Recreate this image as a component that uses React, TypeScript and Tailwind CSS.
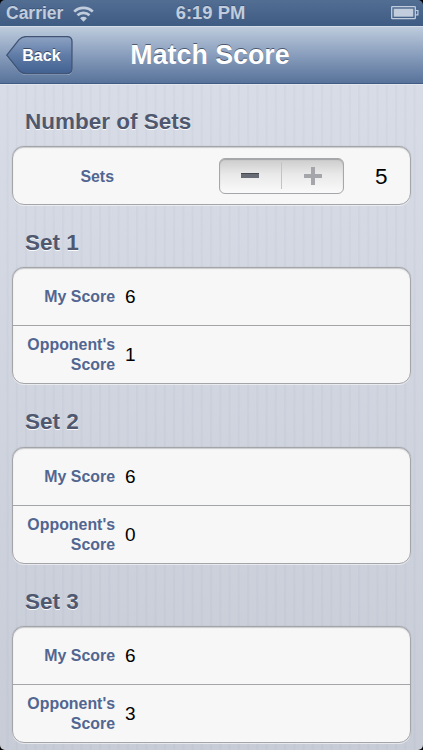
interface MatchSet {
  name: string;
  mine: number;
  opponent: number;
}

const sets: MatchSet[] = [
  { name: "Set 1", mine: 6, opponent: 1 },
  { name: "Set 2", mine: 6, opponent: 0 },
  { name: "Set 3", mine: 6, opponent: 3 },
];

const card =
  "rounded-[12px] border border-[#a4a5a9] bg-[#f7f7f7] shadow-[0_1px_0_rgba(255,255,255,0.6),0_0_1px_rgba(120,122,130,0.5),inset_0_1px_1px_rgba(120,122,130,0.35)]";

function StatusBar() {
  return (
    <header className="grid h-[26px] shrink-0 grid-cols-3 items-center bg-linear-to-b from-[#536e93] to-[#3e5b83] pr-1 pl-[5px] text-[#c1cddd] [text-shadow:0_-1px_0_rgba(30,50,80,0.35)]">
      <div className="flex items-center gap-[10px] pt-px pl-px">
        <span className="text-[17.5px] leading-none font-bold">Carrier</span>
        <svg width="21" height="16" viewBox="0 0 21 16" fill="none" stroke="currentColor" strokeWidth="2.7">
          <path d="M1.2 5.6a13.3 13.3 0 0 1 18.6 0" />
          <path d="M4.5 9.3a8.6 8.6 0 0 1 12 0" />
          <path d="M7.1 12.2a4.7 4.7 0 0 1 6.8 0L10.5 15.8z" fill="currentColor" stroke="none" />
        </svg>
      </div>
      <span className="-ml-[3px] pt-px text-center text-[18.4px] leading-none font-bold whitespace-nowrap">6:19 PM</span>
      <svg className="justify-self-end" width="28" height="14" viewBox="0 0 28 14" fill="none" stroke="currentColor">
        <rect x="0.7" y="0.7" width="23.6" height="12" rx="0.6" strokeWidth="1.3" />
        <rect x="2.7" y="2.7" width="19.6" height="8" fill="currentColor" stroke="none" />
        <path d="M24.7 4.5h2.2v4.4h-2.2" strokeWidth="1.2" />
      </svg>
    </header>
  );
}

function BackButton() {
  return (
    <button className="relative h-[39px] w-[67px] text-white">
      <svg className="absolute inset-0" width="67" height="39" viewBox="0 0 67 39">
        <defs>
          <linearGradient id="back-fill" x1="0" y1="0" x2="0" y2="1">
            <stop offset="0" stopColor="#8ea3c3" />
            <stop offset="0.5" stopColor="#607ca7" />
            <stop offset="1" stopColor="#426191" />
          </linearGradient>
        </defs>
        <path
          d="M1 20.3L13 4.6Q16 1.3 20 1.3H61Q66 1.3 66 6.3V34Q66 38.6 61 38.6H20Q16 38.6 13 35.5Z"
          fill="none"
          stroke="#b4c3d8"
          strokeOpacity="0.6"
        />
        <path
          d="M0.8 19.2L13 3.6Q16 0.6 20 0.6H61Q66 0.6 66 5.6V32.6Q66 37.6 61 37.6H20Q16 37.6 13 34.5Z"
          fill="url(#back-fill)"
          stroke="#415475"
          strokeWidth="1.3"
        />
      </svg>
      <span className="relative block pl-[4px] text-[16.1px] leading-[38px] font-bold [text-shadow:0_-1px_0_rgba(20,30,50,0.6)]">
        Back
      </span>
    </button>
  );
}

function NavBar() {
  return (
    <nav className="grid h-[58px] shrink-0 grid-cols-[67px_1fr_67px] items-center border-t border-b border-t-[#d3dde9] border-b-[#405b84] bg-linear-to-b from-[#bdcbdc] via-[#899ebd] to-[#58729a] pr-2 pl-[6px]">
      <BackButton />
      <h1 className="-ml-[1px] pt-px text-center text-[26.8px] leading-none font-bold whitespace-nowrap text-white [text-shadow:0_-1px_0_rgba(30,40,60,0.65)]">
        Match Score
      </h1>
    </nav>
  );
}

function SectionTitle({ children }: { children: string }) {
  return (
    <h2 className="h-[62.5px] pt-[25px] pl-[13px] text-[22.5px] leading-[26px] font-bold text-[#4f586f] [text-shadow:0_1px_0_rgba(255,255,255,0.9)]">
      {children}
    </h2>
  );
}

function ScoreRow({ label, value }: { label: string; value: number }) {
  return (
    <div className="flex h-[57px] items-center">
      <span className="w-[102px] shrink-0 pt-px text-right text-[15.9px] leading-5 font-bold text-[#516691] last-of-type:pt-0">
        {label}
      </span>
      <span className="pl-[10px] text-[19px] leading-none text-black">{value}</span>
    </div>
  );
}

export default function App() {
  return (
    <div className="relative flex h-[750px] w-[423px] flex-col overflow-hidden bg-linear-to-b from-[#dadee8] to-[#c7ccd7] font-['Liberation_Sans',Arial,sans-serif]">
      <StatusBar />
      <NavBar />

      <main className="flex-1 overflow-hidden border-t border-[#e2e6ed] bg-[repeating-linear-gradient(90deg,transparent_0px,transparent_6px,rgba(110,130,165,0.05)_7px,rgba(110,130,165,0.05)_8px,transparent_9.25px)] px-3">
        {/* Set count */}
        <section className="-mt-[1.5px]">
          <SectionTitle>Number of Sets</SectionTitle>
          <div className={`${card} flex h-[58.75px] items-center`}>
            <span className="w-[101px] pt-[3px] text-right text-[15.9px] font-bold text-[#516691]">Sets</span>
            <div className="mt-[0.5px] ml-[105px] flex h-[36px] w-[125px] items-center rounded-[6px] border border-[#a6a7aa] bg-linear-to-b from-[#cccccd] via-[#e9e9e9] via-45% to-[#fafafa] shadow-[inset_0_1px_1px_rgba(90,90,95,0.35)]">
              <button className="flex flex-1 items-center justify-center" aria-label="Fewer sets">
                <span className="h-[4.5px] w-[18px] border-t border-[#44474f] bg-[#676b76]" />
              </button>
              <span className="h-[27px] w-px bg-[#c3c3c4]" />
              <button className="flex flex-1 items-center justify-center pl-px" aria-label="More sets">
                <svg width="18" height="18" viewBox="0 0 18 18" fill="none" stroke="#a4a6ab" strokeWidth="4">
                  <path d="M9 0V18M0 9H18" />
                </svg>
              </button>
            </div>
            <span className="ml-[31px] pt-[3px] text-[22.5px] leading-none text-black">5</span>
          </div>
        </section>

        {/* One card per set */}
        {sets.map((set) => (
          <section key={set.name} className="h-[179.5px]">
            <SectionTitle>{set.name}</SectionTitle>
            <div className={`${card} h-[117px]`}>
              <ScoreRow label="My Score" value={set.mine} />
              <div className="h-px bg-[#a4a5a9]" />
              <ScoreRow label="Opponent's Score" value={set.opponent} />
            </div>
          </section>
        ))}
      </main>

      {/* Rounded corners of the device screen */}
      <div className="pointer-events-none absolute inset-0 rounded-[5px] shadow-[0_0_0_6px_#000]" />
    </div>
  );
}
